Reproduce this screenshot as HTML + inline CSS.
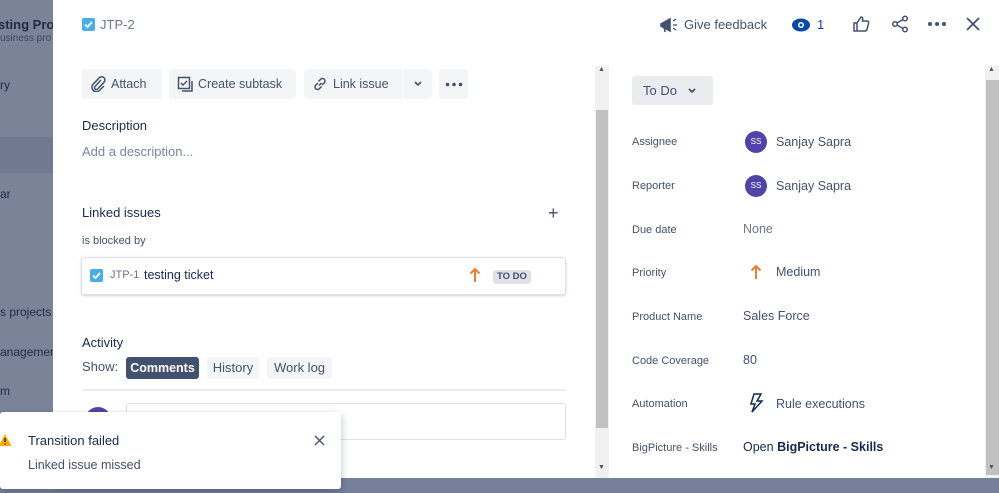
<!DOCTYPE html>
<html><head><meta charset="utf-8"><style>
*{box-sizing:border-box;margin:0;padding:0}
body{width:999px;height:493px;overflow:hidden;background:#76809a;font-family:"Liberation Sans",sans-serif;position:relative;color:#172b4d}
.abs{position:absolute;white-space:nowrap}
.side{position:absolute;left:0;top:0;width:53px;height:493px;background:#7a8499;color:#1f2a44;font-size:12px;overflow:hidden}
.modal{position:absolute;left:53px;top:0;width:946px;height:478px;background:#fff}
.btn{position:absolute;top:69px;height:30px;background:#f4f5f7;border-radius:3px;font-size:12.5px;color:#42526e;display:flex;align-items:center;padding:0 8px;gap:5px;white-space:nowrap}
.lbl{font-size:11px;color:#42526e}
.val{font-size:12.5px;color:#42526e}
.av{position:absolute;width:22px;height:22px;border-radius:50%;background:#5243aa;color:#fff;font-size:8px;text-align:center;line-height:22px}
.sb{position:absolute;background:#f1f1f1}
.thumb{position:absolute;background:#c1c1c1}
</style></head><body>
<div class="side">
 <div class="abs" style="left:-2px;top:17px;font-weight:bold;font-size:13px">sting Proj</div>
 <div class="abs" style="left:0;top:33px;font-size:10px;color:#3c4763">usiness pro</div>
 <div class="abs" style="left:0;top:78px">ry</div>
 <div style="position:absolute;left:0;top:137px;width:53px;height:36px;background:#6f7990"></div>
 <div class="abs" style="left:0;top:187px">ar</div>
 <div class="abs" style="left:0;top:305px">s projects</div>
 <div class="abs" style="left:0;top:345px">anagemen</div>
 <div class="abs" style="left:0;top:384px">m</div>
</div>
<div class="modal"></div>
<div class="abs" style="left:82px;top:18px;width:13px;height:13px;background:#4bade8;border-radius:2px"><svg width="13" height="13"><path d="M3 6.5l2.5 2.5 4.5-5" stroke="#fff" stroke-width="1.8" fill="none"/></svg></div>
<div class="abs" style="left:100px;top:17px;font-size:13px;color:#6b778c">JTP-2</div>
<svg class="abs" style="left:659px;top:16px" width="20" height="18"><path d="M2 8l9-5v12l-9-5z M5 10l1 6" stroke="#42526e" stroke-width="1.6" fill="#42526e"/><path d="M14 5l3-2M14 9h4M14 12l3 2" stroke="#42526e" stroke-width="1.3"/></svg>
<div class="abs" style="left:684px;top:17px;font-size:13px;color:#42526e">Give feedback</div>
<svg class="abs" style="left:791px;top:17px" width="20" height="16"><ellipse cx="10" cy="8" rx="9" ry="6.5" fill="#0747a6"/><circle cx="10" cy="8" r="3" fill="#fff"/><circle cx="10" cy="8" r="1.5" fill="#0747a6"/></svg>
<div class="abs" style="left:817px;top:17px;font-size:13px;color:#0747a6">1</div>
<svg class="abs" style="left:852px;top:15px" width="18" height="18"><path d="M2 8h3v8H2zM5 8l4-6c2 0 2 2 1.5 4H15c1.5 0 2 1 1.5 2.5l-1.5 6c-.3 1-1 1.5-2 1.5H5" stroke="#42526e" stroke-width="1.5" fill="none"/></svg>
<svg class="abs" style="left:891px;top:15px" width="18" height="18"><circle cx="14" cy="3.5" r="2.3" stroke="#42526e" stroke-width="1.5" fill="none"/><circle cx="14" cy="14.5" r="2.3" stroke="#42526e" stroke-width="1.5" fill="none"/><circle cx="4" cy="9" r="2.3" stroke="#42526e" stroke-width="1.5" fill="none"/><path d="M6 8l6-3.5M6 10l6 3.5" stroke="#42526e" stroke-width="1.5"/></svg>
<svg class="abs" style="left:927px;top:21px" width="20" height="6"><circle cx="3" cy="3" r="2" fill="#42526e"/><circle cx="10" cy="3" r="2" fill="#42526e"/><circle cx="17" cy="3" r="2" fill="#42526e"/></svg>
<svg class="abs" style="left:965px;top:16px" width="16" height="16"><path d="M2 2l12 12M14 2L2 14" stroke="#42526e" stroke-width="1.8"/></svg>
<div class="btn" style="left:82px;width:80px"><svg width="16" height="16"><path d="M11 4l-6 6.5a1.8 1.8 0 002.6 2.5l6.4-6.8a3.2 3.2 0 00-4.6-4.5L3 8.3a4.5 4.5 0 006.4 6.3L14 10" stroke="#42526e" stroke-width="1.5" fill="none"/></svg>Attach</div>
<div class="btn" style="left:169px;width:127px"><svg width="16" height="16"><rect x="1.5" y="1.5" width="11" height="11" stroke="#42526e" stroke-width="1.5" fill="none"/><path d="M4 7l2 2 4-4M15 5v10H5" stroke="#42526e" stroke-width="1.5" fill="none"/></svg>Create subtask</div>
<div class="btn" style="left:304px;width:98px;border-radius:3px 0 0 3px"><svg width="16" height="16"><path d="M7 9.5l2.5-2.5M6 7L3.5 9.5a2.5 2.5 0 003.5 3.5L9.5 10.5M10 9l2.5-2.5a2.5 2.5 0 00-3.5-3.5L6.5 5.5" stroke="#42526e" stroke-width="1.5" fill="none"/></svg>Link issue</div>
<div class="btn" style="left:403px;width:29px;border-radius:0 3px 3px 0;justify-content:center;padding:0"><svg width="10" height="8"><path d="M2 2l3 3 3-3" stroke="#42526e" stroke-width="1.6" fill="none"/></svg></div>
<div class="btn" style="left:439px;width:29px;justify-content:center;padding:0"><svg width="18" height="5"><circle cx="2.5" cy="2.5" r="1.8" fill="#42526e"/><circle cx="9" cy="2.5" r="1.8" fill="#42526e"/><circle cx="15.5" cy="2.5" r="1.8" fill="#42526e"/></svg></div>
<div class="abs" style="left:82px;top:118px;font-size:13px;color:#172b4d">Description</div>
<div class="abs" style="left:82px;top:144px;font-size:13px;color:#7a869a">Add a description...</div>
<div class="abs" style="left:82px;top:205px;font-size:13px;color:#172b4d">Linked issues</div>
<div class="abs" style="left:548px;top:203px;font-size:18px;color:#42526e">+</div>
<div class="abs" style="left:82px;top:235px;font-size:11px;color:#42526e">is blocked by</div>
<div class="abs" style="left:81px;top:257px;width:485px;height:38px;border:1px solid #dfe1e6;border-radius:3px;box-shadow:0 1px 2px rgba(9,30,66,.2)"></div>
<div class="abs" style="left:90px;top:269px;width:13px;height:13px;background:#4bade8;border-radius:2px"><svg width="13" height="13"><path d="M3 6.5l2.5 2.5 4.5-5" stroke="#fff" stroke-width="1.8" fill="none"/></svg></div>
<div class="abs" style="left:110px;top:269px;font-size:11px;color:#6b778c">JTP-1</div>
<div class="abs" style="left:144px;top:268px;font-size:12.5px;color:#172b4d">testing ticket</div>
<svg class="abs" style="left:469px;top:267px" width="12" height="16"><path d="M6 15V2M1.5 6.5L6 2l4.5 4.5" stroke="#e97f33" stroke-width="2" fill="none"/></svg>
<div class="abs" style="left:493px;top:270px;height:14px;padding:0 4px;background:#dfe1e6;border-radius:3px;font-size:9.5px;font-weight:bold;color:#42526e;line-height:14px">TO DO</div>
<div class="abs" style="left:82px;top:335px;font-size:13px;color:#172b4d">Activity</div>
<div class="abs" style="left:82px;top:359px;font-size:13px;color:#42526e">Show:</div>
<div class="abs" style="left:126px;top:357px;width:73px;height:22px;background:#42526e;border-radius:3px;color:#fff;font-size:12.5px;font-weight:bold;text-align:center;line-height:22px">Comments</div>
<div class="abs" style="left:207px;top:357px;width:52px;height:22px;background:#f4f5f7;border-radius:3px;color:#42526e;font-size:13px;text-align:center;line-height:22px">History</div>
<div class="abs" style="left:267px;top:357px;width:65px;height:22px;background:#f4f5f7;border-radius:3px;color:#42526e;font-size:13px;text-align:center;line-height:22px">Work log</div>
<div class="abs" style="left:82px;top:389px;width:484px;height:2px;background:#ebecf0"></div>
<div class="abs" style="left:85px;top:407px;width:26px;height:26px;border-radius:50%;background:#5243aa"></div>
<div class="abs" style="left:126px;top:403px;width:440px;height:37px;border:1px solid #dfe1e6;border-radius:3px"></div>
<div class="sb" style="left:595px;top:66px;width:14px;height:412px"></div>
<div class="thumb" style="left:596px;top:110px;width:12px;height:318px"></div>
<div class="abs" style="left:598px;top:66px;font-size:7px;color:#555">▲</div>
<div class="abs" style="left:598px;top:464px;font-size:7px;color:#555">▼</div>
<div class="abs" style="left:632px;top:76px;width:81px;height:29px;background:#ebecf0;border-radius:3px;font-size:13px;color:#42526e;line-height:29px;padding-left:11px">To Do <svg width="10" height="8" style="margin-left:6px"><path d="M2 2l3 3 3-3" stroke="#42526e" stroke-width="1.8" fill="none"/></svg></div>
<div class="abs lbl" style="left:632px;top:136px">Assignee</div>
<div class="av" style="left:745px;top:131px">SS</div>
<div class="abs val" style="left:776px;top:135px">Sanjay Sapra</div>
<div class="abs lbl" style="left:632px;top:180px">Reporter</div>
<div class="av" style="left:745px;top:175px">SS</div>
<div class="abs val" style="left:776px;top:179px">Sanjay Sapra</div>
<div class="abs lbl" style="left:632px;top:224px">Due date</div>
<div class="abs val" style="left:743px;top:222px;color:#6b778c">None</div>
<div class="abs lbl" style="left:632px;top:267px">Priority</div>
<svg class="abs" style="left:750px;top:264px" width="12" height="16"><path d="M6 15V2M1.5 6.5L6 2l4.5 4.5" stroke="#e97f33" stroke-width="2" fill="none"/></svg>
<div class="abs val" style="left:776px;top:265px">Medium</div>
<div class="abs lbl" style="left:632px;top:311px">Product Name</div>
<div class="abs val" style="left:743px;top:309px">Sales Force</div>
<div class="abs lbl" style="left:632px;top:355px">Code Coverage</div>
<div class="abs val" style="left:743px;top:353px">80</div>
<div class="abs lbl" style="left:632px;top:398px">Automation</div>
<svg class="abs" style="left:748px;top:393px" width="16" height="20"><path d="M6 1h7l-4 7h5L4 19l3-8H3z" stroke="#172b4d" stroke-width="1.5" fill="none"/></svg>
<div class="abs val" style="left:776px;top:397px">Rule executions</div>
<div class="abs lbl" style="left:632px;top:442px">BigPicture - Skills</div>
<div class="abs val" style="left:743px;top:440px;color:#172b4d">Open <b>BigPicture - Skills</b></div>
<div class="sb" style="left:985px;top:66px;width:14px;height:412px"></div>
<div class="thumb" style="left:986px;top:80px;width:13px;height:395px"></div>
<div class="abs" style="left:988px;top:66px;font-size:7px;color:#555">▲</div>
<div class="abs" style="left:988px;top:464px;font-size:7px;color:#555">▼</div>
<div class="abs" style="left:0;top:412px;width:341px;height:77px;background:#fff;border-radius:3px;box-shadow:0 3px 8px rgba(9,30,66,.3)"></div>
<svg class="abs" style="left:-2px;top:433px" width="14" height="14"><path d="M7 1l6.5 12H.5z" fill="#ffab00"/><path d="M7 5v4M7 10.5v1" stroke="#172b4d" stroke-width="1.5"/></svg>
<div class="abs" style="left:28px;top:433px;font-size:13px;color:#172b4d">Transition failed</div>
<div class="abs" style="left:28px;top:458px;font-size:12.5px;color:#42526e">Linked issue missed</div>
<svg class="abs" style="left:314px;top:435px" width="11" height="11"><path d="M1 1l9 9M10 1l-9 9" stroke="#42526e" stroke-width="1.4"/></svg>
</body></html>
